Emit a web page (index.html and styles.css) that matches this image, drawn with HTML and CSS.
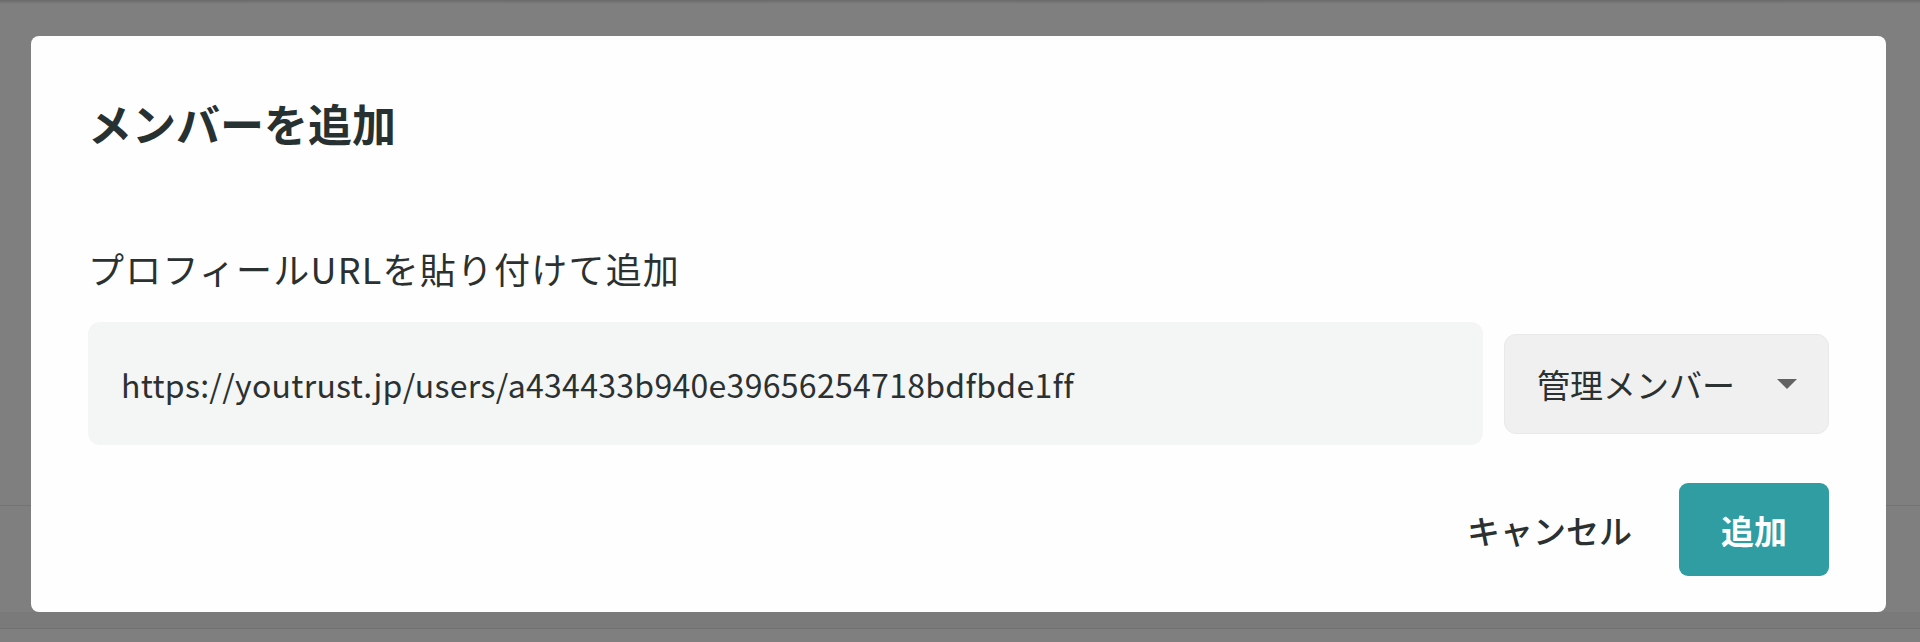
FILE: index.html
```html
<!DOCTYPE html>
<html lang="ja">
<head>
<meta charset="utf-8">
<title>メンバーを追加</title>
<link rel="stylesheet" href="styles.css">
</head>
<body>
<div class="overlay">
  <div class="modal">
    <h2 class="title">メンバーを追加</h2>
    <p class="label">プロフィールURLを貼り付けて追加</p>
    <div class="row">
      <div class="url-input">https://youtrust.jp/users/a434433b940e39656254718bdfbde1ff</div>
      <div class="select">
        <span class="select-text">管理メンバー</span>
        <svg class="caret" width="20" height="10" viewBox="0 0 20 10"><path d="M0 0H20L10 10Z" fill="#626262"/></svg>
      </div>
    </div>
    <div class="footer">
      <button class="btn-cancel">キャンセル</button>
      <button class="btn-add">追加</button>
    </div>
  </div>
</div>
</body>
</html>
```
FILE: styles.css
```css
html, body {
  margin: 0;
  padding: 0;
}
body {
  background: #7f7f7f;
  font-family: "Noto Sans CJK JP", "Noto Sans", sans-serif;
  color: #2b3232;
}
.overlay {
  box-sizing: border-box;
  height: 642px;
  padding: 36px 34px 0 31px;
  background:
    linear-gradient(#6a6a6a, #7f7f7f) 0 0 / 100% 4px no-repeat,
    linear-gradient(#737373, #737373) 0 505px / 100% 1px no-repeat,
    linear-gradient(#7a7a7a, #7a7a7a) 0 612px / 100% 16px no-repeat,
    linear-gradient(#717171, #717171) 0 628px / 100% 1px no-repeat,
    #7f7f7f;
}
.modal {
  box-sizing: border-box;
  width: 1855px;
  height: 576px;
  background: #fefefe;
  border-radius: 8px;
  padding: 57px 57px 36px;
  display: flex;
  flex-direction: column;
}
.title {
  margin: 0;
  font-size: 44px;
  line-height: 60px;
  font-weight: 700;
  color: #283131;
}
.label {
  margin: 90px 0 0;
  font-size: 36px;
  line-height: 50px;
  letter-spacing: 1.2px;
  color: #2b3131;
}
.row {
  margin-top: 29px;
  display: flex;
  align-items: center;
  gap: 21px;
}
.url-input {
  box-sizing: border-box;
  flex: 1;
  height: 123px;
  background: #f4f5f5;
  border-radius: 12px;
  padding-left: 33px;
  display: flex;
  align-items: center;
  font-size: 32px;
  letter-spacing: 0.3px;
  color: #2b3131;
}
.select {
  box-sizing: border-box;
  width: 325px;
  height: 100px;
  background: #f0f0f0;
  border: 1px solid #e9e9e9;
  border-radius: 12px;
  padding: 0 31px 0 32px;
  display: flex;
  align-items: center;
  justify-content: space-between;
}
.select-text {
  font-size: 33px;
  color: #2b3131;
}
.caret {
  display: block;
}
.footer {
  margin-top: 38px;
  display: flex;
  justify-content: flex-end;
  align-items: center;
  gap: 31px;
}
.btn-cancel {
  font-family: inherit;
  border: none;
  background: transparent;
  padding: 0 16px;
  height: 93px;
  font-size: 33px;
  font-weight: 500;
  color: #2b3131;
}
.btn-add {
  font-family: inherit;
  border: none;
  width: 150px;
  height: 93px;
  border-radius: 9px;
  background: #2f9da2;
  color: #fff;
  font-size: 33px;
  font-weight: 700;
}
```
